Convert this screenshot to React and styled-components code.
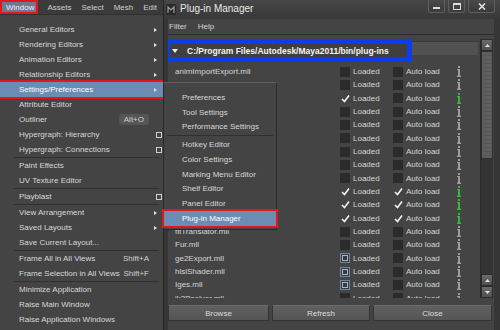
import React from 'react';
import styled, { createGlobalStyle, css } from 'styled-components';

const GlobalStyle = createGlobalStyle`
  html, body {
    margin: 0;
    padding: 0;
    background: #3c3c3c;
  }
  * {
    box-sizing: border-box;
  }
`;

const Screen = styled.div`
  position: relative;
  display: flex;
  width: 500px;
  height: 330px;
  overflow: hidden;
  background: #3c3c3c;
  font-family: "Liberation Sans", Arial, sans-serif;
  font-size: 8px;
  color: #d6d6d6;
`;

/* ---------- left: main menu bar + Window menu ---------- */

const LeftColumn = styled.div`
  display: flex;
  flex-direction: column;
  width: 163px;
  flex-shrink: 0;
`;

const MainBar = styled.div`
  display: flex;
  align-items: center;
  gap: 10px;
  height: 14px;
  background: #3b3b3b;
  white-space: nowrap;
`;

const MainBarItem = styled.span`
  color: #cfcfcf;
  ${(p) =>
    p.$marked &&
    css`
      display: flex;
      align-items: center;
      height: 14px;
      padding: 0 2px 0 4px;
      margin-right: -1px;
      background: #6a7890;
      color: #f0f0f0;
      border: 2px solid #e3161c;
    `}
`;

const DropMenu = styled.div`
  display: flex;
  flex-direction: column;
  flex: 1;
  padding-top: 7px;
  background: #444444;
  border-top: 1px solid #2f2f2f;
`;

const Item = styled.div`
  display: grid;
  grid-template-columns: 1fr auto 14px;
  align-items: center;
  height: ${(p) => (p.$h ? p.$h : 15)}px;
  padding-left: ${(p) => (p.$indent ? p.$indent : 19)}px;
  color: #d8d8d8;
  white-space: nowrap;
  ${(p) =>
    p.$active &&
    css`
      background: #6b8cb3;
      color: #ffffff;
      outline: 2px solid #e3161c;
    `}
`;

const Shortcut = styled.span`
  color: #d0d0d0;
  ${(p) =>
    p.$pill &&
    css`
      padding: 1px 5px;
      background: #565656;
      border-radius: 3px;
    `}
`;

const Trail = styled.span`
  display: flex;
  align-items: center;
  padding-left: 5px;
`;

const Arrow = styled.span`
  width: 0;
  height: 0;
  border-left: 3px solid #e0e0e0;
  border-top: 2.5px solid transparent;
  border-bottom: 2.5px solid transparent;
`;

const OptionBox = styled.span`
  width: 6px;
  height: 6px;
  margin-left: 2px;
  border: 1px solid #cfcfcf;
`;

const Divider = styled.div`
  height: 1px;
  margin: 0 4px 0 14px;
  background: #303030;
`;

/* ---------- right: Plug-in Manager window ---------- */

const PluginWindow = styled.div`
  display: flex;
  flex-direction: column;
  flex: 1;
  background: #363636;
  border-left: 1px solid #262626;
`;

const TitleBar = styled.div`
  display: flex;
  align-items: flex-start;
  height: 19px;
  padding-left: 2px;
  background: linear-gradient(#474747, #383838);
`;

const TitleIcon = styled.svg`
  margin-top: 4px;
  flex-shrink: 0;
`;

const TitleText = styled.span`
  margin: 3px 0 0 4px;
  font-size: 10px;
  color: #e8e8e8;
`;

const Controls = styled.div`
  display: flex;
  gap: 3px;
  margin-left: auto;
  margin-right: 5px;
`;

const CtrlButton = styled.div`
  display: flex;
  align-items: center;
  justify-content: center;
  width: ${(p) => p.$w}px;
  height: 13px;
  border: 1px solid #5f5f5f;
  border-top: none;
  border-radius: 0 0 3px 3px;
  background: linear-gradient(#4a4a4a, #3a3a3a);
  color: #d8d8d8;
`;

const WindowBody = styled.div`
  display: flex;
  flex-direction: column;
  flex: 1;
  margin: 0 6px 0 4px;
  background: #444444;
  min-height: 0;
`;

const WinMenu = styled.div`
  display: flex;
  align-items: center;
  gap: 11px;
  height: 16px;
  padding-left: 1px;
  border-bottom: 1px solid #2c2c2c;
  color: #d4d4d4;
`;

const ScrollArea = styled.div`
  display: flex;
  flex: 1;
  margin-top: 4px;
  min-height: 0;
`;

const ListContent = styled.div`
  flex: 1;
  padding-top: 2px;
  overflow: hidden;
`;

const HeaderBar = styled.div`
  display: flex;
  align-items: center;
  height: 14px;
  margin-right: 2px;
  margin-bottom: 10px;
  background: #525252;
  border-top: 1px solid #3a3a3a;
`;

const PathLabel = styled.div`
  display: flex;
  align-items: center;
  gap: 9px;
  width: 247px;
  height: 23px;
  margin: 4px 0 0 -3px;
  padding-left: 2px;
  border: 5px solid #0b3cf2;
  background: #3f3f3f;
  font-weight: bold;
  font-size: 8.5px;
  color: #f4f4f4;
  white-space: nowrap;
`;

const DownTriangle = styled.span`
  width: 0;
  height: 0;
  border-top: 4px solid #f0f0f0;
  border-left: 3px solid transparent;
  border-right: 3px solid transparent;
`;

const Row = styled.div`
  display: grid;
  grid-template-columns: 165px 53px 64px 10px;
  align-items: center;
  height: 13.33px;
  padding-left: 7px;
  white-space: nowrap;
  color: #d6d6d6;
`;

const Check = styled.span`
  display: flex;
  align-items: center;
  gap: 3px;
`;

const Box = styled.span`
  position: relative;
  display: flex;
  align-items: center;
  justify-content: center;
  width: 10px;
  height: 10px;
  background: ${(p) => (p.$checked ? 'transparent' : '#2b2b2b')};
  ${(p) =>
    p.$hover &&
    css`
      background: #323a44;
      border: 1px solid #6f86a2;
      &::after {
        content: '';
        width: 4px;
        height: 4px;
        border: 1px solid #b4b4b4;
      }
    `}
`;

const Scrollbar = styled.div`
  display: flex;
  flex-direction: column;
  width: 13px;
  margin-right: 1px;
  background: #343434;
  border-left: 1px solid #2a2a2a;
`;

const ScrollBtn = styled.div`
  display: flex;
  align-items: center;
  justify-content: center;
  height: 12px;
  background: linear-gradient(#6a6a6a, #505050);
  border: 1px solid #2b2b2b;
`;

const ScrollThumb = styled.div`
  height: 108px;
  background: repeating-linear-gradient(#5e5e5e 0 3px, #565656 3px 4px);
  border: 1px solid #2e2e2e;
`;

const ScrollTrack = styled.div`
  flex: 1;
`;

const ButtonRow = styled.div`
  display: grid;
  grid-template-columns: 101px 98px 119px;
  column-gap: 3px;
  margin: 7px 0 9px;
`;

const Button = styled.div`
  display: flex;
  align-items: center;
  justify-content: center;
  height: 16px;
  background: linear-gradient(#606060, #555555);
  border: 1px solid #333333;
  border-top-color: #6c6c6c;
  color: #dcdcdc;
`;

/* ---------- submenu overlay ---------- */

const SubMenu = styled.div`
  position: absolute;
  left: 163px;
  top: 82px;
  display: flex;
  flex-direction: column;
  width: 114px;
  padding: 7px 0 3px;
  background: #444444;
  border: 1px solid #2a2a2a;
  border-top-color: #606060;
`;

const SubDivider = styled.div`
  height: 1px;
  margin: 1px 3px 1px 3px;
  background: #303030;
`;

/* ---------- small drawings ---------- */

function InfoIcon({ on }) {
  const c = on ? '#37b53d' : '#9c9c9c';
  return (
    <svg width="4" height="11" viewBox="0 0 4 11">
      <rect x="1" y="0" width="2" height="2" fill={c} />
      <rect x="0" y="3" width="3" height="1" fill={c} />
      <rect x="1" y="3" width="2" height="7" fill={c} />
      <rect x="0" y="9.5" width="4" height="1.5" fill={c} />
    </svg>
  );
}

function Tick() {
  return (
    <svg width="9" height="9" viewBox="0 0 9 9">
      <path d="M1 5 L3.5 7.5 L8 1.5" fill="none" stroke="#f2f2f2" strokeWidth="1.6" />
    </svg>
  );
}

const windowMenu = [
  { label: 'General Editors', trail: 'arrow' },
  { label: 'Rendering Editors', trail: 'arrow' },
  { label: 'Animation Editors', trail: 'arrow' },
  { label: 'Relationship Editors', trail: 'arrow' },
  { label: 'Settings/Preferences', trail: 'arrow', active: true },
  { label: 'Attribute Editor' },
  { label: 'Outliner', shortcut: 'Alt+O', pill: true },
  { label: 'Hypergraph: Hierarchy', trail: 'box' },
  { label: 'Hypergraph: Connections', trail: 'box' },
  'sep',
  { label: 'Paint Effects' },
  { label: 'UV Texture Editor' },
  'sep',
  { label: 'Playblast', trail: 'box' },
  'sep',
  { label: 'View Arrangement', trail: 'arrow' },
  { label: 'Saved Layouts', trail: 'arrow' },
  { label: 'Save Current Layout...' },
  'sep',
  { label: 'Frame All in All Views', shortcut: 'Shift+A' },
  { label: 'Frame Selection in All Views', shortcut: 'Shift+F' },
  'sep',
  { label: 'Minimize Application' },
  { label: 'Raise Main Window' },
  { label: 'Raise Application Windows' },
];

const settingsMenu = [
  'Preferences',
  'Tool Settings',
  'Performance Settings',
  'sep',
  'Hotkey Editor',
  'Color Settings',
  'Marking Menu Editor',
  'Shelf Editor',
  'Panel Editor',
  'Plug-in Manager',
];

// [name, loaded, autoload, hover-style boxes]
const plugins = [
  ['animImportExport.mll', false, false],
  ['ArubaTessellator.mll', false, false],
  ['AutodeskPacketFile.mll', true, false],
  ['cgfxShader.mll', false, false],
  ['clearcoat.mll', false, false],
  ['ddsFloatReader.mll', false, false],
  ['decomposeMatrix.mll', false, false],
  ['DirectConnect.mll', false, false],
  ['dxfTranslator.mll', false, false],
  ['fbxmaya.mll', true, true],
  ['fltTranslator.mll', true, true],
  ['Fur.mll', true, true],
  ['fltTranslator.mll', false, false],
  ['Fur.mll', false, false],
  ['ge2Export.mll', false, false, true],
  ['hlslShader.mll', false, false, true],
  ['Iges.mll', false, false, true],
  ['ik2Bsolver.mll', false, false],
];

export default function App() {
  return (
    <Screen>
      <GlobalStyle />
      <LeftColumn>
        <MainBar>
          <MainBarItem $marked>Window</MainBarItem>
          <MainBarItem>Assets</MainBarItem>
          <MainBarItem>Select</MainBarItem>
          <MainBarItem>Mesh</MainBarItem>
          <MainBarItem>Edit</MainBarItem>
        </MainBar>
        <DropMenu>
          {windowMenu.map((it, i) =>
            it === 'sep' ? (
              <Divider key={i} />
            ) : (
              <Item key={i} $active={it.active}>
                <span>{it.label}</span>
                <Shortcut $pill={it.pill}>{it.shortcut}</Shortcut>
                <Trail>
                  {it.trail === 'arrow' && <Arrow />}
                  {it.trail === 'box' && <OptionBox />}
                </Trail>
              </Item>
            )
          )}
        </DropMenu>
      </LeftColumn>

      <PluginWindow>
        <TitleBar>
          <TitleIcon width="10" height="11" viewBox="0 0 10 11">
            <rect x="0" y="0" width="10" height="11" rx="1" fill="#2a2a2a" />
            <path d="M2 9 V3 L5 6 L8 3 V9" fill="none" stroke="#9a9a9a" strokeWidth="1.2" />
          </TitleIcon>
          <TitleText>Plug-in Manager</TitleText>
          <Controls>
            <CtrlButton $w={17}>
              <svg width="7" height="6" viewBox="0 0 7 6">
                <rect x="0" y="4" width="7" height="2" fill="#dcdcdc" />
              </svg>
            </CtrlButton>
            <CtrlButton $w={17}>
              <svg width="8" height="7" viewBox="0 0 8 7">
                <rect x="0.5" y="0.5" width="7" height="6" fill="none" stroke="#dcdcdc" />
                <rect x="0" y="0" width="8" height="2" fill="#dcdcdc" />
              </svg>
            </CtrlButton>
            <CtrlButton $w={27}>
              <svg width="8" height="7" viewBox="0 0 8 7">
                <path d="M1 0.5 L7 6.5 M7 0.5 L1 6.5" stroke="#e0e0e0" strokeWidth="1.6" />
              </svg>
            </CtrlButton>
          </Controls>
        </TitleBar>

        <WindowBody>
          <WinMenu>
            <span>Filter</span>
            <span>Help</span>
          </WinMenu>
          <ScrollArea>
            <ListContent>
              <HeaderBar>
                <PathLabel>
                  <DownTriangle />
                  C:/Program Files/Autodesk/Maya2011/bin/plug-ins
                </PathLabel>
              </HeaderBar>
              {plugins.map(([name, loaded, auto, hover], i) => (
                <Row key={i}>
                  <span>{name}</span>
                  <Check>
                    <Box $checked={loaded} $hover={hover}>{loaded && <Tick />}</Box>
                    Loaded
                  </Check>
                  <Check>
                    <Box $checked={auto}>{auto && <Tick />}</Box>
                    Auto load
                  </Check>
                  <InfoIcon on={loaded} />
                </Row>
              ))}
            </ListContent>
            <Scrollbar>
              <ScrollBtn>
                <svg width="5" height="3" viewBox="0 0 5 3">
                  <path d="M0 3 L2.5 0 L5 3 Z" fill="#e0e0e0" />
                </svg>
              </ScrollBtn>
              <ScrollThumb />
              <ScrollTrack />
              <ScrollBtn>
                <svg width="5" height="3" viewBox="0 0 5 3">
                  <path d="M0 3 L2.5 0 L5 3 Z" fill="#e0e0e0" />
                </svg>
              </ScrollBtn>
              <ScrollBtn>
                <svg width="5" height="3" viewBox="0 0 5 3">
                  <path d="M0 0 L2.5 3 L5 0 Z" fill="#e0e0e0" />
                </svg>
              </ScrollBtn>
            </Scrollbar>
          </ScrollArea>
          <ButtonRow>
            <Button>Browse</Button>
            <Button>Refresh</Button>
            <Button>Close</Button>
          </ButtonRow>
        </WindowBody>
      </PluginWindow>

      <SubMenu>
        {settingsMenu.map((label, i) =>
          label === 'sep' ? (
            <SubDivider key={i} />
          ) : (
            <Item key={i} $h={14.75} $indent={18} $active={label === 'Plug-in Manager'}>
              <span>{label}</span>
            </Item>
          )
        )}
      </SubMenu>
    </Screen>
  );
}
